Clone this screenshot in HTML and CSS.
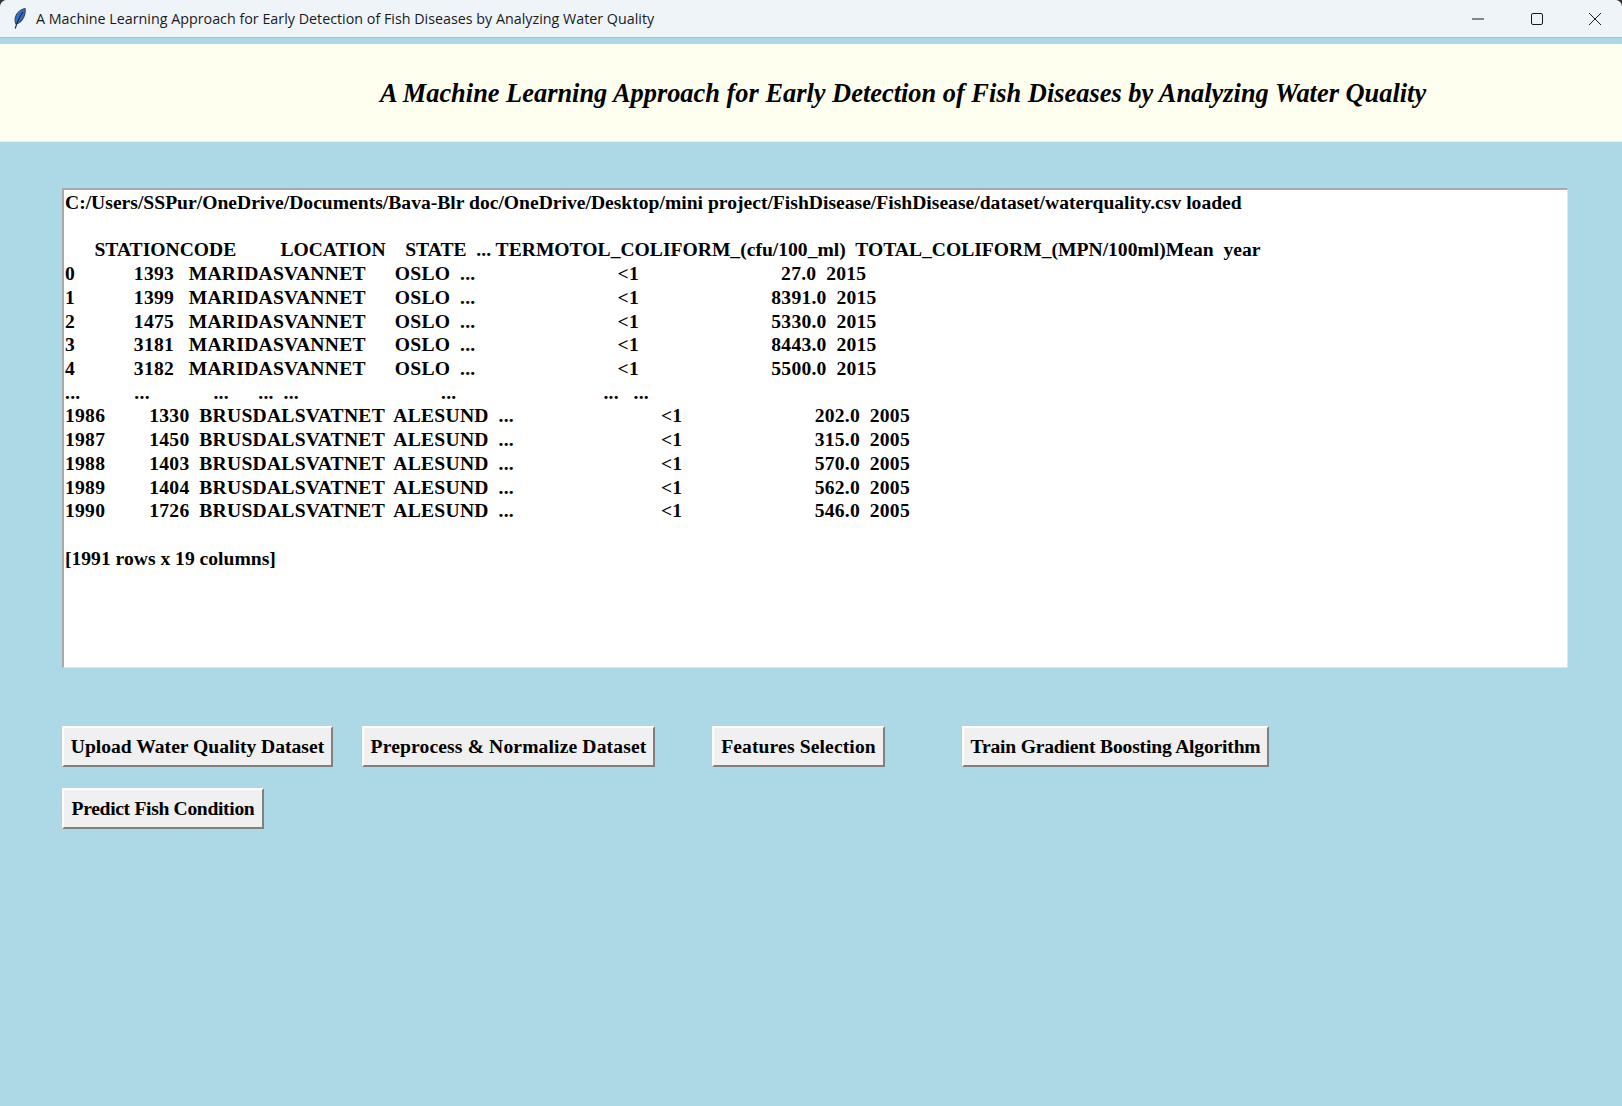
FILE: index.html
```html
<!DOCTYPE html>
<html lang="en">
<head>
  <meta charset="UTF-8">
  <title>A Machine Learning Approach for Early Detection of Fish Diseases by Analyzing Water Quality</title>
  <link rel="stylesheet" href="styles.css">
</head>
<body>
  <div class="window">
    <div class="titlebar">
      <svg class="feather" width="12" height="21" viewBox="0 0 12 21">
        <path d="M11 .5C6.500 1.500 2.500 5 1.500 9C.800 12 1.200 14.500 2 16C5.500 15 8.500 12 10 8.500C11 6 11.500 3 11 .5Z" fill="#2a6ed6" stroke="#4a4a4a" stroke-width="1.200"/>
        <path d="M9 4C6 8 3.500 13 1.200 20.500" fill="none" stroke="#23272e" stroke-width="1.200"/>
      </svg>
      <span class="titlebar-text">A Machine Learning Approach for Early Detection of Fish Diseases by Analyzing Water Quality</span>
      <div class="win-controls">
        <svg class="win-btn" width="14" height="14" viewBox="0 0 14 14"><path d="M1 7H13" stroke="#1a1a1a" fill="none"/></svg>
        <svg class="win-btn" width="14" height="14" viewBox="0 0 14 14"><rect x="1.500" y="1.500" width="11" height="11" rx="1.500" stroke="#1a1a1a" fill="none"/></svg>
        <svg class="win-btn" width="14" height="14" viewBox="0 0 14 14"><path d="M1 1L13 13M13 1L1 13" stroke="#1a1a1a" fill="none"/></svg>
      </div>
    </div>
    <div class="header">
      <h1>A Machine Learning Approach for Early Detection of Fish Diseases by Analyzing Water Quality</h1>
    </div>
    <pre class="output">C:/Users/SSPur/OneDrive/Documents/Bava-Blr doc/OneDrive/Desktop/mini project/FishDisease/FishDisease/dataset/waterquality.csv loaded

      STATIONCODE         LOCATION    STATE  ... TERMOTOL_COLIFORM_(cfu/100_ml)  TOTAL_COLIFORM_(MPN/100ml)Mean  year
<span class="rows">0            1393   MARIDASVANNET      OSLO  ...                             &lt;1                             27.0  2015
1            1399   MARIDASVANNET      OSLO  ...                             &lt;1                           8391.0  2015
2            1475   MARIDASVANNET      OSLO  ...                             &lt;1                           5330.0  2015
3            3181   MARIDASVANNET      OSLO  ...                             &lt;1                           8443.0  2015
4            3182   MARIDASVANNET      OSLO  ...                             &lt;1                           5500.0  2015
...           ...             ...      ...  ...                             ...                              ...   ...
1986         1330  BRUSDALSVATNET  ALESUND  ...                              &lt;1                           202.0  2005
1987         1450  BRUSDALSVATNET  ALESUND  ...                              &lt;1                           315.0  2005
1988         1403  BRUSDALSVATNET  ALESUND  ...                              &lt;1                           570.0  2005
1989         1404  BRUSDALSVATNET  ALESUND  ...                              &lt;1                           562.0  2005
1990         1726  BRUSDALSVATNET  ALESUND  ...                              &lt;1                           546.0  2005</span>

[1991 rows x 19 columns]</pre>
    <div class="actions">
      <div class="action-row">
        <button class="btn btn-upload">Upload Water Quality Dataset</button>
        <button class="btn btn-preprocess">Preprocess &amp; Normalize Dataset</button>
        <button class="btn btn-features">Features Selection</button>
        <button class="btn btn-train">Train Gradient Boosting Algorithm</button>
      </div>
      <div class="action-row">
        <button class="btn btn-predict">Predict Fish Condition</button>
      </div>
    </div>
  </div>
</body>
</html>
```

FILE: styles.css
```css
html, body {
  height: 100%;
}
body {
  margin: 0;
  background-color: #333;
  font-family: 'Liberation Serif', 'Times New Roman', serif;
  color: #000;
  overflow: hidden;
}
.window {
  height: 100%;
  background-color: #add8e6;
  border-radius: 7px 7px 0 0;
  overflow: hidden;
}
.titlebar {
  height: 38px;
  box-sizing: border-box;
  background-color: #eff4f9;
  border-bottom: 1px solid #9cc5d3;
  display: flex;
  align-items: center;
  font-family: 'Open Sans', 'Noto Sans', sans-serif;
  font-size: 14.300px;
  color: #1a1a1a;
  padding-left: 14px;
}
.feather {
  margin-right: 10px;
}
.titlebar-text {
  margin-top: -1px;
}
.win-controls {
  margin-left: auto;
  display: flex;
  gap: 44.500px;
  padding-right: 20px;
}
.header {
  margin-top: 6px;
  height: 98px;
  box-sizing: border-box;
  background-color: #fffff0;
  border-bottom: 1px solid #e6f2ee;
  display: flex;
  align-items: center;
  padding: 2px 0 0 380px;
}
h1 {
  margin: 0;
  font-size: 26.400px;
  font-style: italic;
  font-weight: bold;
  white-space: nowrap;
}
.output {
  margin: 46px 54px 0 62px;
  height: 480px;
  box-sizing: border-box;
  background-color: #fff;
  border-top: 2px solid #a9a9a9;
  border-left: 2px solid #a9a9a9;
  border-right: 1px solid #e3e3e3;
  border-bottom: 1px solid #e3e3e3;
  padding: 1px 0 0 1px;
  font-family: 'Liberation Serif', 'Times New Roman', serif;
  font-weight: bold;
  font-size: 19.600px;
  line-height: 23.720px;
}
.rows {
  letter-spacing: 0.250px;
  word-spacing: -0.250px;
}
.actions {
  margin: 58px 0 0 62px;
  display: flex;
  flex-direction: column;
  gap: 21px;
}
.action-row {
  display: flex;
}
.btn {
  height: 41px;
  box-sizing: border-box;
  background-color: #f0f0f0;
  border-top: 2px solid #fff;
  border-left: 2px solid #fff;
  border-right: 2px solid #808080;
  border-bottom: 2px solid #808080;
  padding: 0;
  font-family: 'Liberation Serif', 'Times New Roman', serif;
  font-weight: bold;
  font-size: 19.600px;
  color: #000;
}
.btn-upload { width: 271px; }
.btn-preprocess { width: 293px; margin-left: 29px; letter-spacing: 0.130px; }
.btn-features { width: 173px; margin-left: 57px; letter-spacing: 0.120px; }
.btn-train { width: 307px; margin-left: 77px; letter-spacing: -0.190px; }
.btn-predict { width: 202px; letter-spacing: -0.330px; }
```
